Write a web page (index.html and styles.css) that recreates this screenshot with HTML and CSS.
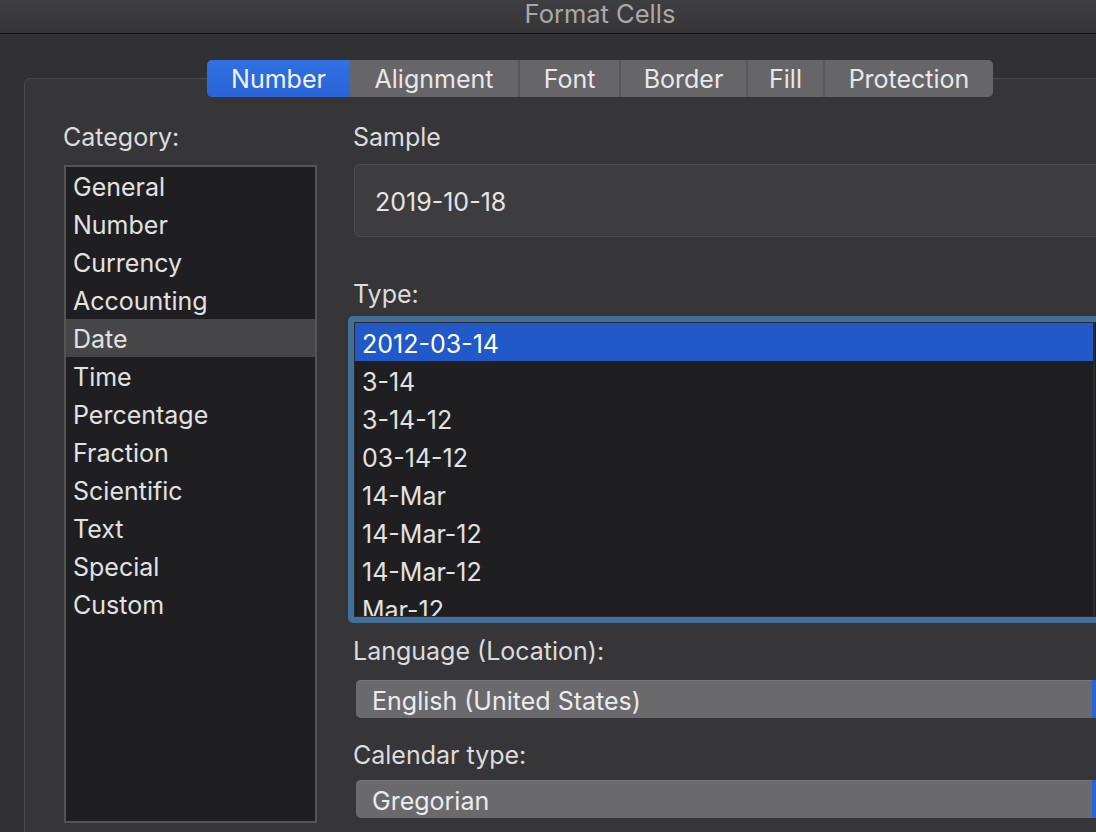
FILE: index.html
```html
<!DOCTYPE html>
<html lang="en">
<head>
<meta charset="utf-8">
<title>Format Cells</title>
<link rel="stylesheet" href="styles.css">
</head>
<body>
<div class="window">
  <div class="titlebar">Format Cells</div>
  <div class="content">
    <div class="tabs">
      <div class="tab active t-number">Number</div>
      <div class="tab t-alignment">Alignment</div>
      <div class="tab t-font">Font</div>
      <div class="tab t-border">Border</div>
      <div class="tab t-fill">Fill</div>
      <div class="tab t-protection">Protection</div>
    </div>
    <div class="group">
      <div class="col-left">
        <div class="label">Category:</div>
        <div class="catlist">
          <div class="item">General</div>
          <div class="item">Number</div>
          <div class="item">Currency</div>
          <div class="item">Accounting</div>
          <div class="item selected">Date</div>
          <div class="item">Time</div>
          <div class="item">Percentage</div>
          <div class="item">Fraction</div>
          <div class="item">Scientific</div>
          <div class="item">Text</div>
          <div class="item">Special</div>
          <div class="item">Custom</div>
        </div>
      </div>
      <div class="col-right">
        <div class="label">Sample</div>
        <div class="sample">2019-10-18</div>
        <div class="label type-label">Type:</div>
        <div class="ring">
          <div class="typelist">
            <div class="rows">
              <div class="item active">2012-03-14</div>
              <div class="item">3-14</div>
              <div class="item">3-14-12</div>
              <div class="item">03-14-12</div>
              <div class="item">14-Mar</div>
              <div class="item">14-Mar-12</div>
              <div class="item">14-Mar-12</div>
              <div class="item">Mar-12</div>
            </div>
            <div class="scroll"></div>
          </div>
        </div>
        <div class="label lang-label">Language (Location):</div>
        <div class="popup lang-popup"><span class="ptext">English (United States)</span><span class="arrow"></span></div>
        <div class="label cal-label">Calendar type:</div>
        <div class="popup cal-popup"><span class="ptext">Gregorian</span><span class="arrow"></span></div>
      </div>
    </div>
  </div>
</div>
</body>
</html>
```

FILE: styles.css
```css
html, body {
  margin: 0;
  padding: 0;
  height: 100%;
  overflow: hidden;
  background: #313133;
}

.window {
  width: 1200px;
  height: 832px;
  font-family: "Inter", "Noto Sans", "Liberation Sans", sans-serif;
  color: #dedede;
}

.titlebar {
  height: 33px;
  border-bottom: 1px solid #0d0d0d;
  background: linear-gradient(#3e3e40, #363638);
  color: #a9a9a9;
  font-size: 25.5px;
  line-height: 27px;
  text-align: center;
}

.content {
  padding: 26px 24px 0;
}

.tabs {
  display: flex;
  justify-content: center;
  height: 37px;
  margin-bottom: -19px;
  position: relative;
  z-index: 1;
}

.tab {
  box-sizing: border-box;
  background: #666668;
  color: #e9e9e9;
  font-size: 25px;
  line-height: 38px;
  text-align: center;
  border-left: 2px solid #58585a;
  white-space: nowrap;
}

.t-number { width: 143px; }
.t-alignment { width: 168px; }
.t-font { width: 101px; }
.t-border { width: 127px; }
.t-fill { width: 77px; }
.t-protection { width: 170px; }

.tab:first-child {
  border-left: none;
  border-radius: 5px 0 0 5px;
}

.tab:last-child {
  border-radius: 0 5px 5px 0;
}

.tab.active {
  background: linear-gradient(#3070e0, #2a64d8);
  color: #f2f2f2;
}

.tab.active + .tab {
  border-left: none;
}

.group {
  box-sizing: border-box;
  width: 1152px;
  height: 900px;
  border: 1px solid #49494b;
  border-radius: 6px;
  background: #363638;
  display: grid;
  grid-template-columns: 255px 758px;
  column-gap: 35px;
  padding: 43px 64px 0 38px;
  align-items: start;
}

.label {
  font-size: 25px;
  line-height: 30px;
  color: #dcdcdc;
  white-space: nowrap;
}

.catlist {
  box-sizing: border-box;
  margin: 13px 0 0 1px;
  width: 253px;
  height: 658px;
  border: 2px solid #545456;
  background: #1f1f21;
}

.item {
  height: 38px;
  line-height: 40px;
  font-size: 25px;
  color: #e2e2e2;
  white-space: nowrap;
}

.catlist .item {
  padding-left: 7px;
}

.catlist .item.selected {
  background: #464648;
}

.sample {
  box-sizing: border-box;
  margin: 12px 0 0 1px;
  height: 73px;
  border: 1px solid #4b4b4d;
  border-radius: 6px;
  background: #3d3d3f;
  font-size: 25px;
  line-height: 75px;
  padding-left: 20px;
  color: #e4e4e4;
}

.type-label {
  margin-top: 42px;
}

.ring {
  box-sizing: border-box;
  margin: 7px -5px 0 -5px;
  height: 307px;
  padding: 6px;
  border-radius: 5px;
  background: #42709b;
}

.typelist {
  box-sizing: border-box;
  height: 100%;
  border: 1px solid #2a2a2c;
  background: #1f1f21;
  display: flex;
  overflow: hidden;
}

.rows {
  flex: 1;
  overflow: hidden;
}

.rows .item {
  padding-left: 7px;
  line-height: 42px;
}

.rows .item.active {
  background: #2159c8;
  color: #ffffff;
}

.scroll {
  width: 14px;
  border-left: 2px solid #2c2c2e;
  background: #1f1f21;
}

.lang-label {
  margin-top: 13px;
}

.popup {
  box-sizing: border-box;
  height: 38px;
  margin: 14px -1px 0 3px;
  border-radius: 5px;
  background: #6a6a6c;
  box-shadow: inset 0 1px 0 #767678;
  display: flex;
  overflow: hidden;
}

.ptext {
  flex: 1;
  padding-left: 16px;
  font-size: 25px;
  line-height: 43px;
  color: #ececec;
  white-space: nowrap;
}

.arrow {
  width: 20px;
  background: #2b64d8;
}

.cal-label {
  margin-top: 22px;
}

.cal-popup {
  margin-top: 10px;
}
```
